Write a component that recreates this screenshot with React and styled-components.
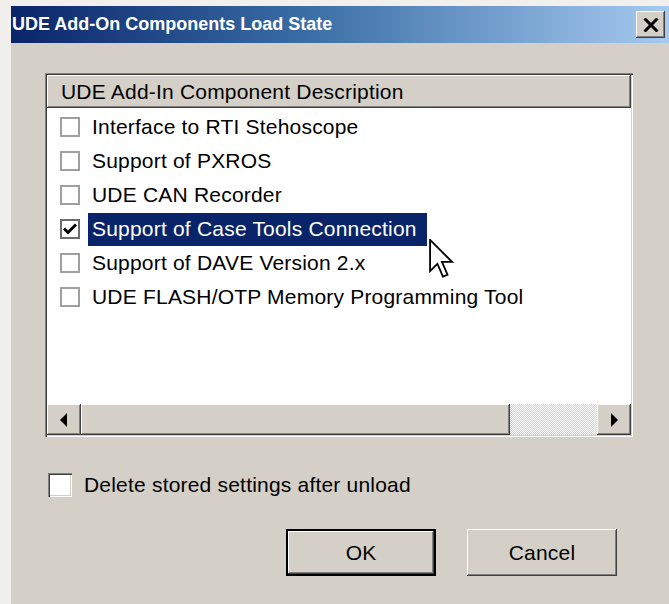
import styled, { createGlobalStyle } from 'styled-components';

const GlobalStyle = createGlobalStyle`
  html, body {
    margin: 0;
    padding: 0;
    background: #f1f0ec;
  }
  body {
    font-family: "Liberation Sans", Arial, sans-serif;
  }
`;

const components = [
  { label: 'Interface to RTI Stehoscope', checked: false },
  { label: 'Support of PXROS', checked: false },
  { label: 'UDE CAN Recorder', checked: false },
  { label: 'Support of Case Tools Connection', checked: true, selected: true },
  { label: 'Support of DAVE Version 2.x', checked: false },
  { label: 'UDE FLASH/OTP Memory Programming Tool', checked: false },
];

const Screen = styled.div`
  width: 669px;
  height: 604px;
  box-sizing: border-box;
  padding: 6px 0 0 11px;
  background: #f1f0ec;
  overflow: hidden;
`;

const Dialog = styled.div`
  display: flex;
  flex-direction: column;
  height: 100%;
  background: #d4d0c8;
`;

const TitleBar = styled.div`
  display: flex;
  align-items: center;
  justify-content: space-between;
  height: 37px;
  padding: 0 4px 0 1px;
  background: linear-gradient(to right, #0a246a 0%, #3a6ea5 45%, #a6caf0 100%);
  color: #fff;
  font-weight: bold;
  font-size: 18px;
`;

const raised = `
  background: #d4d0c8;
  box-shadow: inset -1px -1px 0 #404040, inset 1px 1px 0 #ffffff,
    inset -2px -2px 0 #808080, inset 2px 2px 0 #d4d0c8;
`;

const CloseButton = styled.div`
  display: flex;
  align-items: center;
  justify-content: center;
  width: 29px;
  height: 27px;
  ${raised}
`;

const Body = styled.div`
  display: flex;
  flex-direction: column;
  padding: 30px 36px 0 34px;
  color: #000;
  font-size: 21px;
  letter-spacing: 0.2px;
`;

const ListFrame = styled.div`
  display: flex;
  flex-direction: column;
  width: 588px;
  height: 364px;
  box-sizing: border-box;
  padding: 2px;
  background: #fff;
  box-shadow: inset 1px 1px 0 #808080, inset 2px 2px 0 #404040,
    inset -1px -1px 0 #ffffff, inset -2px -2px 0 #d4d0c8;
`;

const Header = styled.div`
  display: flex;
  align-items: center;
  height: 33px;
  flex: none;
  padding-left: 14px;
  ${raised}
`;

const Rows = styled.div`
  position: relative;
  flex: 1;
  padding-top: 2px;
  background: #fff;
`;

const Row = styled.div`
  display: flex;
  align-items: center;
  height: 34px;
  padding-left: 13px;
`;

const ListCheck = styled.div`
  display: flex;
  align-items: center;
  justify-content: center;
  width: 20px;
  height: 20px;
  box-sizing: border-box;
  border: 2px solid ${(p) => (p.$checked ? '#6d6d6d' : '#a0a0a0')};
  background: #fff;
`;

const RowLabel = styled.span`
  display: flex;
  align-items: center;
  height: 33px;
  margin-left: 8px;
  padding: 0 10px 0 4px;
  background: ${(p) => (p.$selected ? '#0a246a' : 'transparent')};
  color: ${(p) => (p.$selected ? '#fff' : '#000')};
`;

const Pointer = styled.svg`
  position: absolute;
  left: 382px;
  top: 131px;
`;

const ScrollBar = styled.div`
  display: flex;
  height: 31px;
  flex: none;
`;

const ArrowButton = styled.div`
  display: flex;
  align-items: center;
  justify-content: center;
  width: 34px;
  flex: none;
  ${raised}
`;

const Thumb = styled.div`
  width: 429px;
  flex: none;
  ${raised}
`;

const Track = styled.div`
  flex: 1;
  background-color: #ffffff;
  background-image: conic-gradient(#d4d0c8 25%, transparent 0 50%, #d4d0c8 0 75%, transparent 0);
  background-size: 2px 2px;
`;

const OptionRow = styled.label`
  display: flex;
  align-items: center;
  gap: 12px;
  margin: 36px 0 0 3px;
`;

const SunkenBox = styled.span`
  width: 24px;
  height: 24px;
  background: #fff;
  box-shadow: inset 1px 1px 0 #808080, inset 2px 2px 0 #404040,
    inset -1px -1px 0 #ffffff, inset -2px -2px 0 #d4d0c8;
`;

const ButtonRow = styled.div`
  display: flex;
  justify-content: flex-end;
  gap: 31px;
  margin-top: 32px;
  padding-right: 16px;
`;

const Button = styled.div`
  display: flex;
  align-items: center;
  justify-content: center;
  width: 150px;
  height: 47px;
  box-sizing: border-box;
  ${raised}
  ${(p) =>
    p.$default &&
    `
    border: 2px solid #000;
  `}
`;

const Check = () => (
  <svg width="14" height="12" viewBox="0 0 14 12">
    <path d="M1 5.5 L5 9.5 L13 1.5" fill="none" stroke="#000" strokeWidth="3" />
  </svg>
);

const App = () => (
  <>
    <GlobalStyle />
    <Screen>
      <Dialog>
        <TitleBar>
          <span>UDE Add-On Components Load State</span>
          <CloseButton>
            <svg width="16" height="14" viewBox="0 0 16 14">
              <path d="M1.5 0.5 L14.5 13.5 M14.5 0.5 L1.5 13.5" stroke="#000" strokeWidth="3" />
            </svg>
          </CloseButton>
        </TitleBar>
        <Body>
          <ListFrame>
            <Header>UDE Add-In Component Description</Header>
            <Rows>
              {components.map((c) => (
                <Row key={c.label}>
                  <ListCheck $checked={c.checked}>{c.checked && <Check />}</ListCheck>
                  <RowLabel $selected={c.selected}>{c.label}</RowLabel>
                </Row>
              ))}
              <Pointer width="26" height="44" viewBox="0 0 14 24">
                <path
                  d="M0.5 0.5 L0.5 17.5 L4.5 13.5 L7.5 20.5 L10 19.5 L7 12.5 L12.5 12.5 Z"
                  fill="#fff"
                  stroke="#000"
                  strokeWidth="1"
                  strokeLinejoin="miter"
                />
              </Pointer>
            </Rows>
            <ScrollBar>
              <ArrowButton>
                <svg width="8" height="14" viewBox="0 0 8 14">
                  <path d="M7 0 L0 7 L7 14 Z" fill="#000" />
                </svg>
              </ArrowButton>
              <Thumb />
              <Track />
              <ArrowButton>
                <svg width="8" height="14" viewBox="0 0 8 14">
                  <path d="M1 0 L8 7 L1 14 Z" fill="#000" />
                </svg>
              </ArrowButton>
            </ScrollBar>
          </ListFrame>
          <OptionRow>
            <SunkenBox />
            Delete stored settings after unload
          </OptionRow>
          <ButtonRow>
            <Button $default>OK</Button>
            <Button>Cancel</Button>
          </ButtonRow>
        </Body>
      </Dialog>
    </Screen>
  </>
);

export default App;
